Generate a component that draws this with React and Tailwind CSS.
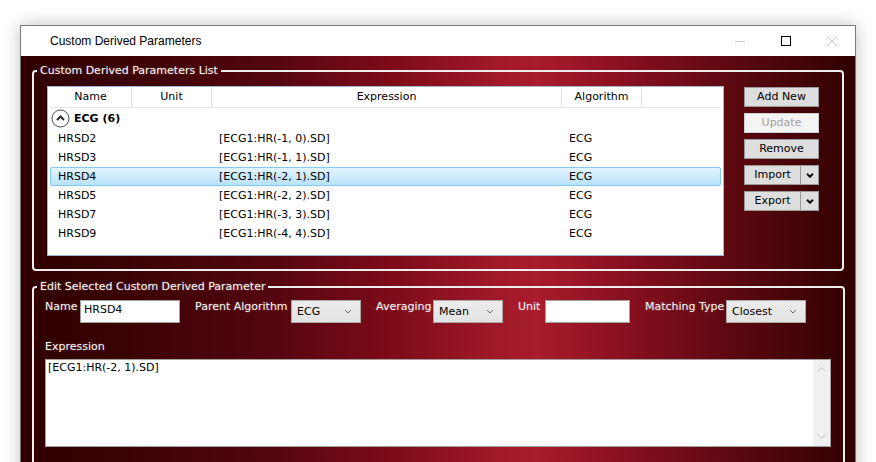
import React from "react";

function SmallChevron() {
  return (
    <svg width="8" height="5" viewBox="0 0 8 5" className="shrink-0">
      <path d="M1 1 L4 4 L7 1" fill="none" stroke="#6a6a6a" strokeWidth="1" />
    </svg>
  );
}

function SplitArrow() {
  return (
    <svg width="8" height="5" viewBox="0 0 8 5">
      <path d="M1 0.8 L4 3.8 L7 0.8" fill="none" stroke="#111" strokeWidth="2" />
    </svg>
  );
}

function Button({ children, disabled }) {
  return (
    <div
      className={
        disabled
          ? "h-[20px] w-[75px] border border-[#cfcfcf] bg-[#f4f4f4] text-[#a3a3a3] flex items-center justify-center"
          : "h-[20px] w-[75px] border border-[#9a9a9a] bg-[#dedede] text-black flex items-center justify-center"
      }
    >
      {children}
    </div>
  );
}

function SplitButton({ children }) {
  return (
    <div className="h-[20px] w-[75px] border border-[#9a9a9a] bg-[#dedede] text-black flex">
      <div className="flex-1 flex items-center justify-center border-r border-[#9a9a9a]">{children}</div>
      <div className="w-[17px] flex items-center justify-center">
        <SplitArrow />
      </div>
    </div>
  );
}

function Select({ value, w }) {
  return (
    <div
      className={`${w} h-[23px] border border-[#a9a9a9] bg-[linear-gradient(#ececec,#e3e3e3)] flex items-center pl-[5px] pr-[8px] text-black`}
    >
      <span className="flex-1">{value}</span>
      <SmallChevron />
    </div>
  );
}

const rows = [
  ["HRSD2", "[ECG1:HR(-1, 0).SD]"],
  ["HRSD3", "[ECG1:HR(-1, 1).SD]"],
  ["HRSD4", "[ECG1:HR(-2, 1).SD]", true],
  ["HRSD5", "[ECG1:HR(-2, 2).SD]"],
  ["HRSD7", "[ECG1:HR(-3, 3).SD]"],
  ["HRSD9", "[ECG1:HR(-4, 4).SD]"],
];

export default function App() {
  return (
    <div className="w-[876px] h-[462px] overflow-hidden bg-white pl-[20px] pt-[25px] font-['DejaVu_Sans',sans-serif] text-[11px] leading-[14px]">
      <div className="w-[836px] h-[460px] border border-[#7a7a7a] bg-white shadow-[0_0_16px_rgba(0,0,0,0.25)] flex flex-col">
        {/* Title bar */}
        <div className="h-[30px] flex items-center bg-white shrink-0">
          <div className="pl-[29px] flex-1 font-['Liberation_Sans',sans-serif] text-[12px] text-black">
            Custom Derived Parameters
          </div>
          <div className="flex h-full">
            <div className="w-[46px] flex items-center justify-center">
              <div className="w-[10px] h-px bg-[#c4c4c4]" />
            </div>
            <div className="w-[46px] flex items-center justify-center">
              <div className="w-[10px] h-[10px] border border-black" />
            </div>
            <div className="w-[46px] flex items-center justify-center">
              <svg width="10" height="10" viewBox="0 0 10 10">
                <path d="M0.5 0.5 L9.5 9.5 M9.5 0.5 L0.5 9.5" stroke="#c4c4c4" strokeWidth="1" />
              </svg>
            </div>
          </div>
        </div>

        {/* Body */}
        <div className="flex-1 px-[11px] pt-[8px] bg-[linear-gradient(90deg,#2f0001_0%,#3a0204_12%,#540610_30%,#7c0b18_44%,#a21a2a_58%,#a81c2c_62%,#8a1020_72%,#5a0810_86%,#300000_100%)] flex flex-col">
          {/* Group 1 */}
          <fieldset className="border-2 border-[#ededed] rounded-[4px] pl-[13px] pr-[13px] pb-[13px]">
            <legend className="ml-[-10px] px-[3px] text-[#f6f6f6] [text-shadow:0_0_2px_rgba(255,255,255,0.35)]">
              Custom Derived Parameters List
            </legend>
            <div className="flex pt-[8px] gap-[20px]">
              <div className="w-[677px] h-[170px] border border-[#9fb7d0] bg-white px-[2px] text-black">
                {/* header */}
                <div className="flex h-[21px] border-b border-[#e3e3e3]">
                  <div className="w-[82px] border-r border-[#e3e3e3] flex items-center justify-center">Name</div>
                  <div className="w-[80px] border-r border-[#e3e3e3] flex items-center justify-center">Unit</div>
                  <div className="w-[350px] border-r border-[#e3e3e3] flex items-center justify-center">Expression</div>
                  <div className="w-[80px] border-r border-[#e3e3e3] flex items-center justify-center">Algorithm</div>
                  <div className="w-[79px]" />
                </div>
                {/* group */}
                <div className="h-[21px] flex items-center pl-[1px] gap-[4px] font-bold">
                  <svg width="19" height="19" viewBox="0 0 19 19">
                    <circle cx="9.5" cy="9.5" r="8.5" fill="white" stroke="#4a4a4a" strokeWidth="1" />
                    <path d="M6 11 L9.5 7.5 L13 11" fill="none" stroke="#2a2a2a" strokeWidth="2" />
                  </svg>
                  <span>ECG (6)</span>
                </div>
                {rows.map(([n, e, sel]) => (
                  <div
                    key={n}
                    className={
                      sel
                        ? "flex h-[19px] items-center rounded-[2px] border border-[#86c9f2] bg-[linear-gradient(#e2f4fe,#b8e2fa)]"
                        : "flex h-[19px] items-center border border-transparent"
                    }
                  >
                    <div className="w-[82px] pl-[7px]">{n}</div>
                    <div className="w-[80px]" />
                    <div className="w-[350px] pl-[6px]">{e}</div>
                    <div className="w-[80px] pl-[6px]">ECG</div>
                  </div>
                ))}
              </div>
              <div className="flex flex-col gap-[6px] pt-[1px]">
                <Button>Add New</Button>
                <Button disabled>Update</Button>
                <Button>Remove</Button>
                <SplitButton>Import</SplitButton>
                <SplitButton>Export</SplitButton>
              </div>
            </div>
          </fieldset>

          {/* Group 2 */}
          <fieldset className="mt-[9px] flex-1 border-2 border-[#ededed] rounded-[4px] pl-[11px] pr-[12px]">
            <legend className="ml-[-8px] px-[3px] text-[#f6f6f6] [text-shadow:0_0_2px_rgba(255,255,255,0.35)]">
              Edit Selected Custom Derived Parameter
            </legend>
            <div className="pt-[6px] flex items-start text-[#f6f6f6] [text-shadow:0_0_2px_rgba(255,255,255,0.3)]">
              <div className="w-[35px] whitespace-nowrap">Name</div>
              <div className="w-[100px] h-[23px] border border-[#a0a0a0] bg-white text-black pl-[3px] pt-[2px] [text-shadow:none]">
                HRSD4
              </div>
              <div className="ml-[15px] w-[96px] whitespace-nowrap">Parent Algorithm</div>
              <div className="[text-shadow:none]">
                <Select value="ECG" w="w-[70px]" />
              </div>
              <div className="ml-[15px] w-[57px] whitespace-nowrap">Averaging</div>
              <div className="[text-shadow:none]">
                <Select value="Mean" w="w-[70px]" />
              </div>
              <div className="ml-[15px] w-[27px] whitespace-nowrap">Unit</div>
              <div className="w-[85px] h-[23px] border border-[#a0a0a0] bg-white" />
              <div className="ml-[15px] w-[81px] whitespace-nowrap">Matching Type</div>
              <div className="[text-shadow:none]">
                <Select value="Closest" w="w-[80px]" />
              </div>
            </div>
            <div className="mt-[17px] text-[#f6f6f6] [text-shadow:0_0_2px_rgba(255,255,255,0.3)]">Expression</div>
            <div className="mt-[5px] w-[786px] h-[88px] border border-[#a0a0a0] bg-white flex">
              <div className="flex-1 pl-[2px] pt-[1px] text-black">[ECG1:HR(-2, 1).SD]</div>
              <div className="w-[17px] bg-[#f0f0f0] flex flex-col items-center justify-between py-[7px]">
                <svg width="9" height="5" viewBox="0 0 9 5">
                  <path d="M0.5 4.5 L4.5 0.5 L8.5 4.5" fill="none" stroke="#c2c2c2" strokeWidth="1" />
                </svg>
                <svg width="9" height="5" viewBox="0 0 9 5">
                  <path d="M0.5 0.5 L4.5 4.5 L8.5 0.5" fill="none" stroke="#c2c2c2" strokeWidth="1" />
                </svg>
              </div>
            </div>
          </fieldset>
        </div>
      </div>
    </div>
  );
}
